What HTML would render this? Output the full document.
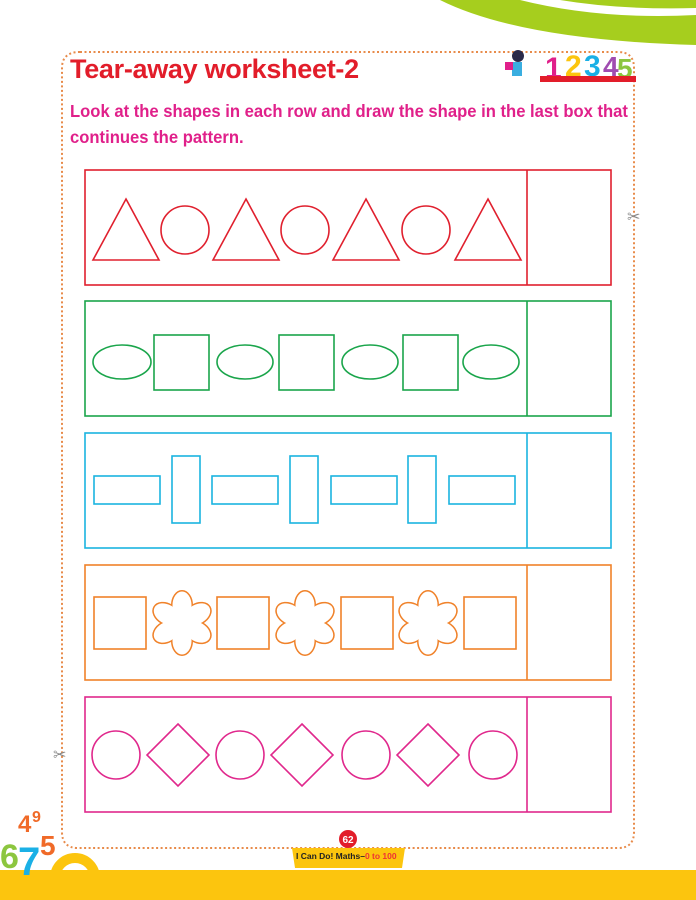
<!DOCTYPE html>
<html><head><meta charset="utf-8"><style>
body{margin:0;width:696px;height:900px;overflow:hidden;background:#fff;position:relative;font-family:"Liberation Sans",sans-serif}
.t{position:absolute;left:70px;top:54px;font-size:27px;font-weight:bold;color:#e21d2a;letter-spacing:-0.3px}
.i{position:absolute;left:70px;top:98px;font-size:17.5px;font-weight:bold;color:#e0208a;line-height:26px;font-family:"Liberation Sans Narrow","Liberation Sans",sans-serif;transform:scaleX(0.95);transform-origin:left;white-space:nowrap}
</style></head><body>
<svg width="696" height="900" style="position:absolute;left:0;top:0">
<path d="M440 0 Q520 40 696 45 L696 0 Z" fill="#a6ce1e"/>
<path d="M520 0 Q600 20 696 15 L696 8 Q620 10 560 0Z" fill="#fff"/>
<path d="M80 52 H618 Q634 52 634 68 V832 Q634 848 618 848 H78 Q62 848 62 832 V68 Q62 52 80 52Z" fill="none" stroke="#e88b4a" stroke-width="2" stroke-dasharray="2 2.5"/>
<rect x="0" y="870" width="696" height="30" fill="#fcc50e"/>
<path d="M292 848 L405 848 L402 868 L295 868Z" fill="#fcc50e"/>
<circle cx="348" cy="839" r="9" fill="#e21d2a"/>
<text x="348" y="843" font-size="10" font-weight="bold" fill="#fff" text-anchor="middle">62</text>
<text x="296" y="859" font-size="8.5" font-weight="bold" fill="#222">I Can Do! Maths–<tspan fill="#e33">0 to 100</tspan></text>
<text x="0" y="868" font-size="34" font-weight="bold" fill="#8cc63f">6</text>
<text x="18" y="875" font-size="40" font-weight="bold" fill="#1ab0e6">7</text>
<text x="40" y="855" font-size="28" font-weight="bold" fill="#f06a28">5</text>
<text x="18" y="832" font-size="24" font-weight="bold" fill="#f06a28">4</text>
<text x="32" y="822" font-size="16" font-weight="bold" fill="#f06a28">9</text>
<circle cx="75" cy="878" r="20" fill="none" stroke="#fcc50e" stroke-width="10"/>
<text x="545" y="78" font-size="30" font-weight="bold" fill="#e0208a">1</text>
<text x="565" y="76" font-size="30" font-weight="bold" fill="#fcc50e">2</text>
<text x="584" y="76" font-size="30" font-weight="bold" fill="#1ab0e6">3</text>
<text x="603" y="76" font-size="28" font-weight="bold" fill="#a04cb0">4</text>
<text x="617" y="78" font-size="28" font-weight="bold" fill="#8cc63f">5</text>
<rect x="540" y="76" width="96" height="6" fill="#e21d2a"/>
<circle cx="518" cy="56" r="6" fill="#2a2a4a"/><rect x="512" y="62" width="10" height="14" fill="#3aaee0"/><rect x="505" y="62" width="8" height="8" fill="#e0208a"/>
<g fill="none" stroke-width="1.6">
<g stroke="#e0202e"><rect x="85" y="170" width="526" height="115"/><line x1="527" y1="170" x2="527" y2="285"/>
<path d="M126 199 L159 260 H93Z M246 199 L279 260 H213Z M366 199 L399 260 H333Z M488 199 L521 260 H455Z"/>
<circle cx="185" cy="230" r="24"/><circle cx="305" cy="230" r="24"/><circle cx="426" cy="230" r="24"/></g>
<g stroke="#1aa54b"><rect x="85" y="301" width="526" height="115"/><line x1="527" y1="301" x2="527" y2="416"/>
<ellipse cx="122" cy="362" rx="29" ry="17"/><ellipse cx="245" cy="362" rx="28" ry="17"/><ellipse cx="370" cy="362" rx="28" ry="17"/><ellipse cx="491" cy="362" rx="28" ry="17"/>
<rect x="154" y="335" width="55" height="55"/><rect x="279" y="335" width="55" height="55"/><rect x="403" y="335" width="55" height="55"/></g>
<g stroke="#1ab4e0"><rect x="85" y="433" width="526" height="115"/><line x1="527" y1="433" x2="527" y2="548"/>
<rect x="94" y="476" width="66" height="28"/><rect x="212" y="476" width="66" height="28"/><rect x="331" y="476" width="66" height="28"/><rect x="449" y="476" width="66" height="28"/>
<rect x="172" y="456" width="28" height="67"/><rect x="290" y="456" width="28" height="67"/><rect x="408" y="456" width="28" height="67"/></g>
<g stroke="#f0822a"><rect x="85" y="565" width="526" height="115"/><line x1="527" y1="565" x2="527" y2="680"/>
<rect x="94" y="597" width="52" height="52"/><rect x="217" y="597" width="52" height="52"/><rect x="341" y="597" width="52" height="52"/><rect x="464" y="597" width="52" height="52"/></g>
<g stroke="#e0288c"><rect x="85" y="697" width="526" height="115"/><line x1="527" y1="697" x2="527" y2="812"/>
<circle cx="116" cy="755" r="24"/><circle cx="240" cy="755" r="24"/><circle cx="366" cy="755" r="24"/><circle cx="493" cy="755" r="24"/>
<path d="M178 724 L209 755 L178 786 L147 755Z M302 724 L333 755 L302 786 L271 755Z M428 724 L459 755 L428 786 L397 755Z"/></g>
</g>
<defs><g id="pet"><ellipse cx="0" cy="-18" rx="9.5" ry="13.5"/><ellipse cx="0" cy="-18" rx="9.5" ry="13.5" transform="rotate(60)"/><ellipse cx="0" cy="-18" rx="9.5" ry="13.5" transform="rotate(120)"/><ellipse cx="0" cy="-18" rx="9.5" ry="13.5" transform="rotate(180)"/><ellipse cx="0" cy="-18" rx="9.5" ry="13.5" transform="rotate(240)"/><ellipse cx="0" cy="-18" rx="9.5" ry="13.5" transform="rotate(300)"/><circle r="7"/></g></defs>
<g transform="translate(182,623)"><use href="#pet" fill="none" stroke="#f0822a" stroke-width="3"/><use href="#pet" fill="#fff"/></g>
<g transform="translate(305,623)"><use href="#pet" fill="none" stroke="#f0822a" stroke-width="3"/><use href="#pet" fill="#fff"/></g>
<g transform="translate(428,623)"><use href="#pet" fill="none" stroke="#f0822a" stroke-width="3"/><use href="#pet" fill="#fff"/></g>
<text x="627" y="222" font-size="16" fill="#888">✂</text>
<text x="53" y="760" font-size="16" fill="#888">✂</text>
</svg>
<div class="t">Tear-away worksheet-2</div>
<div class="i">Look at the shapes in each row and draw the shape in the last box that<br>continues the pattern.</div>
</body></html>
